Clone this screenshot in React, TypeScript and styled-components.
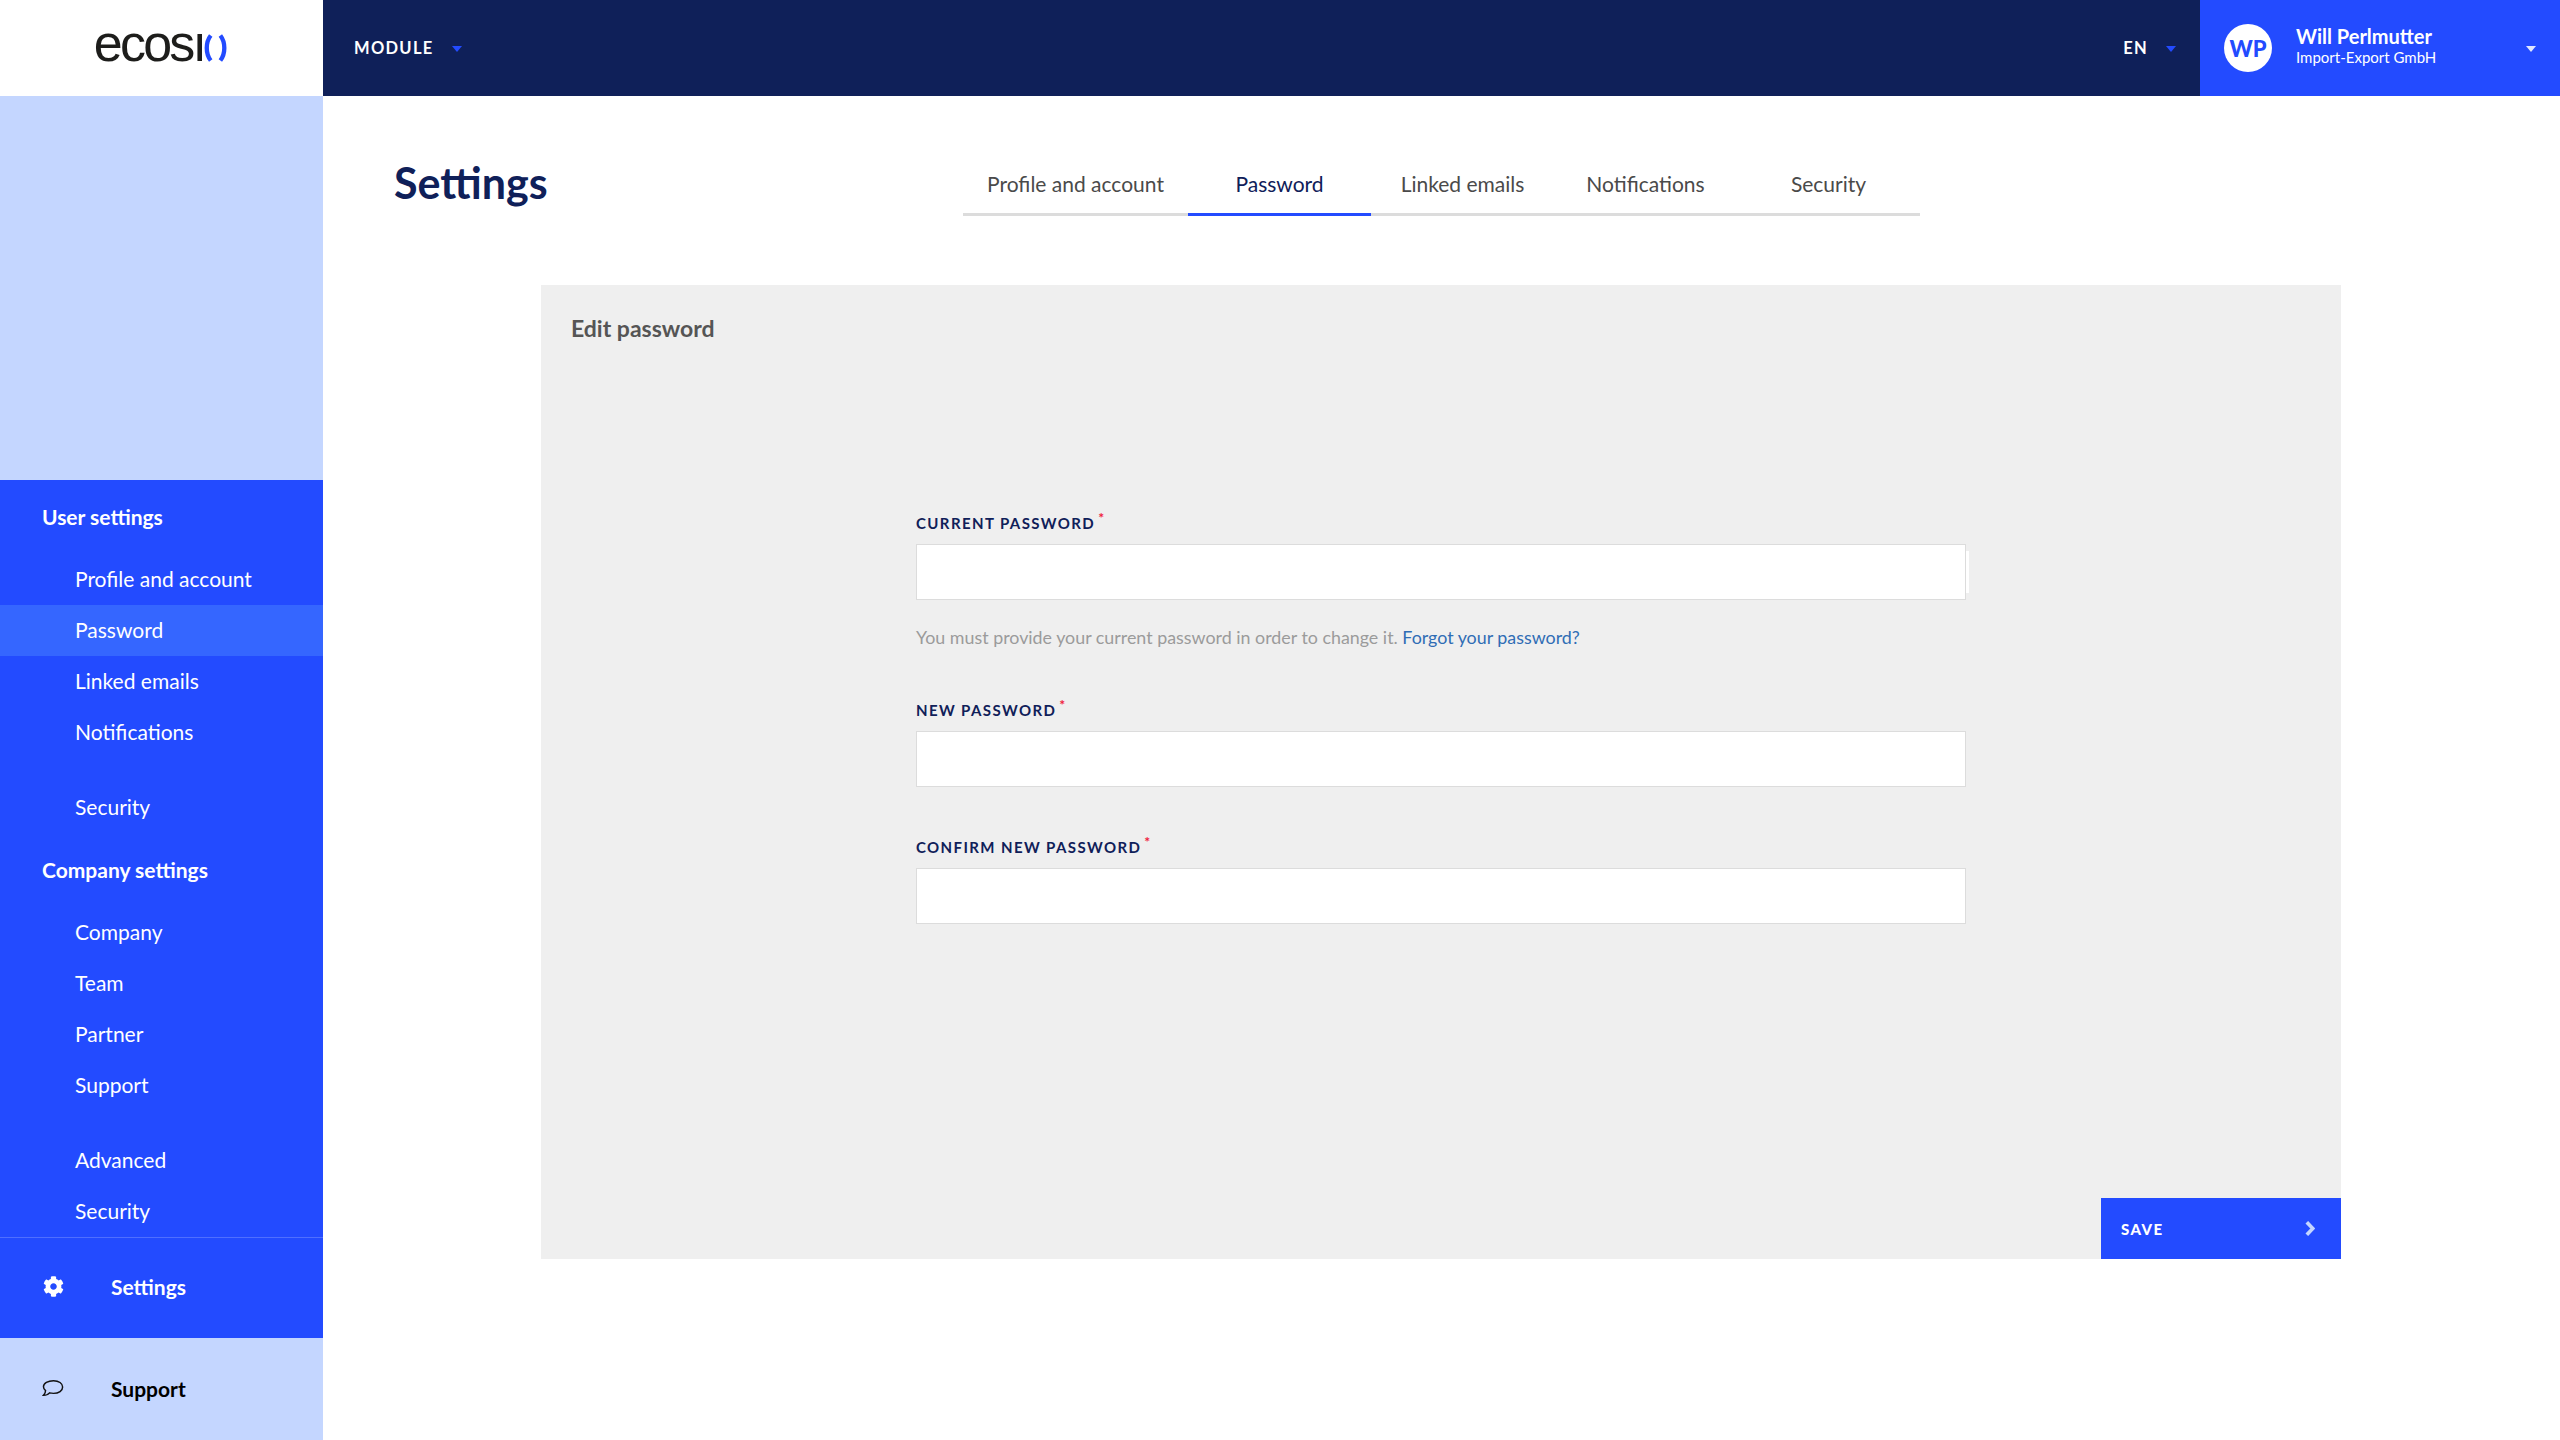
import React, { FC } from "react";
import styled, { createGlobalStyle } from "styled-components";
import { FaCog } from "react-icons/fa";

const NAVY = "#0f2059";
const BLUE = "#234bff";
const LIGHT = "#c4d6ff";

const GlobalStyle = createGlobalStyle`
  html, body {
    margin: 0;
    padding: 0;
    background: #fff;
    font-family: Lato, "Open Sans", sans-serif;
  }
  * {
    box-sizing: border-box;
  }
`;

const Page = styled.div`
  display: grid;
  grid-template-columns: 323px 1fr;
  width: 2560px;
  height: 1440px;
  overflow: hidden;
`;

const Sidebar = styled.aside`
  display: flex;
  flex-direction: column;
  height: 1440px;
  background: ${LIGHT};
`;

const LogoBox = styled.div`
  display: flex;
  align-items: center;
  justify-content: center;
  height: 96px;
  background: #fff;
`;

const LogoText = styled.span`
  font-family: "Liberation Sans", sans-serif;
  font-size: 52px;
  line-height: 52px;
  letter-spacing: -2.8px;
  color: #1d1d1b;
  transform: translateY(-5px);
`;

const LogoParens = styled.svg`
  width: 25px;
  height: 28px;
`;

const Spacer = styled.div`
  height: 384px;
`;

const NavPanel = styled.nav`
  display: flex;
  flex-direction: column;
  height: 757px;
  background: ${BLUE};
`;

const NavHeader = styled.div`
  display: flex;
  align-items: center;
  height: 74px;
  padding: 0 0 1px 42px;
  font-size: 21px;
  font-weight: 700;
  color: #fff;
`;

const NavItem = styled.a<{ $active?: boolean; $gap?: boolean }>`
  display: flex;
  align-items: center;
  height: 51px;
  flex-shrink: 0;
  margin-top: ${(p) => (p.$gap ? "24px" : "0")};
  padding: 0 0 3px 75px;
  font-size: 21px;
  color: #fff;
  background: ${(p) => (p.$active ? "#3566ff" : "transparent")};
`;

const FooterRow = styled.div<{ $light?: boolean }>`
  display: flex;
  align-items: center;
  height: ${(p) => (p.$light ? "102px" : "101px")};
  padding: 0 0 ${(p) => (p.$light ? "1px" : "3px")} 42px;
  font-size: 21px;
  font-weight: 700;
  color: ${(p) => (p.$light ? "#000" : "#fff")};
  background: ${(p) => (p.$light ? LIGHT : BLUE)};
  border-top: ${(p) => (p.$light ? "none" : "1px solid rgba(255, 255, 255, 0.2)")};
`;

const FooterIcon = styled.span`
  display: flex;
  align-items: center;
  justify-content: center;
  width: 22px;
  margin-right: 47px;
  font-size: 21px;
`;

const Content = styled.div`
  display: flex;
  flex-direction: column;
  min-width: 0;
`;

const TopBar = styled.header`
  display: flex;
  align-items: center;
  height: 96px;
  padding-left: 31px;
  background: ${NAVY};
`;

const TopMenu = styled.div`
  display: flex;
  align-items: center;
  padding-bottom: 1px;
  font-size: 16.5px;
  font-weight: 700;
  letter-spacing: 1.3px;
  color: #fff;
`;

const Caret = styled.span<{ $color?: string; $gap: number }>`
  width: 0;
  height: 0;
  margin-left: ${(p) => p.$gap}px;
  margin-top: 2px;
  border-left: 5.5px solid transparent;
  border-right: 5.5px solid transparent;
  border-top: 6px solid ${(p) => p.$color ?? BLUE};
`;

const TopRight = styled.div`
  display: flex;
  align-items: center;
  height: 100%;
  margin-left: auto;
`;

const LangMenu = styled(TopMenu)`
  margin-right: 24px;
`;

const UserBox = styled.div`
  display: flex;
  align-items: center;
  width: 360px;
  height: 100%;
  padding: 0 24px;
  background: ${BLUE};
  color: #fff;
`;

const Avatar = styled.div`
  display: flex;
  align-items: center;
  justify-content: center;
  width: 48px;
  height: 48px;
  border-radius: 50%;
  background: #fff;
  color: ${BLUE};
  font-size: 22px;
  font-weight: 900;
`;

const UserText = styled.div`
  display: flex;
  flex-direction: column;
  margin: 0 auto 7px 24px;
`;

const UserName = styled.div`
  font-size: 20px;
  line-height: 24px;
  font-weight: 700;
`;

const UserCompany = styled.div`
  font-size: 15px;
  line-height: 18px;
`;

const Main = styled.main`
  display: flex;
  flex-direction: column;
  flex: 1;
  padding-top: 58px;
`;

const HeadRow = styled.div`
  display: flex;
  align-items: flex-end;
  height: 62px;
  padding-left: 71px;
`;

const Title = styled.h1`
  width: 569px;
  margin: 0 0 5px;
  font-size: 43px;
  line-height: 56px;
  font-weight: 700;
  color: ${NAVY};
`;

const Tabs = styled.div`
  display: flex;
  width: 957px;
  border-bottom: 3px solid #dcdcdc;
`;

const Tab = styled.a<{ $active?: boolean; $wide?: boolean }>`
  display: flex;
  align-items: center;
  justify-content: center;
  width: ${(p) => (p.$wide ? "225px" : "183px")};
  height: 62px;
  margin-bottom: -3px;
  font-size: 21px;
  color: ${(p) => (p.$active ? NAVY : "#4a4a4a")};
  border-bottom: 3px solid ${(p) => (p.$active ? BLUE : "transparent")};
`;

const Card = styled.section`
  display: flex;
  flex-direction: column;
  width: 1800px;
  height: 974px;
  margin: 69px 0 0 218px;
  background: #efefef;
`;

const CardTitle = styled.h2`
  margin: 28px 0 0 30px;
  font-size: 23px;
  line-height: 30px;
  font-weight: 700;
  color: #555;
`;

const Form = styled.form`
  display: flex;
  flex-direction: column;
  width: 1050px;
  margin: 170px 0 0 375px;
`;

const Field = styled.div<{ $gap?: number }>`
  margin-top: ${(p) => p.$gap ?? 0}px;
`;

const Label = styled.label`
  display: block;
  height: 31px;
  font-size: 15px;
  line-height: 20px;
  font-weight: 700;
  letter-spacing: 1.4px;
  color: ${NAVY};
`;

const Required = styled.sup`
  margin-left: 3px;
  font-size: 14px;
  line-height: 0;
  color: #f0203c;
`;

const InputWrap = styled.div`
  position: relative;
`;

const Input = styled.input`
  display: block;
  width: 100%;
  height: 56px;
  border: 1.5px solid #dcdcdc;
  background: #fff;
  outline: none;
`;

const InputBump = styled.span`
  position: absolute;
  top: 7px;
  right: -3px;
  width: 3px;
  height: 42px;
  background: #fff;
`;

const Hint = styled.p`
  margin: 25px 0 0;
  font-size: 17.85px;
  line-height: 24px;
  color: #9b9b9b;
`;

const HintLink = styled.a`
  color: #2f6db5;
`;

const SaveButton = styled.button`
  display: flex;
  align-items: center;
  justify-content: space-between;
  align-self: flex-end;
  width: 240px;
  height: 61px;
  margin-top: auto;
  padding: 0 26px 0 20px;
  border: none;
  background: ${BLUE};
  color: #fff;
  font-family: inherit;
  font-size: 15px;
  font-weight: 900;
  letter-spacing: 1.4px;
`;

const ChatIcon: FC = () => (
  <svg width="24" height="19" viewBox="0 0 24 19" fill="none" stroke="#111" strokeWidth="1.6">
    <path d="M12.5 1C6.5 1 1.6 3.6 1.6 7.6c0 1.8 1 3.2 2.3 4.2 0 1.8-.9 3.7-2.3 5.2 2.9 0 5.2-1 6.6-2.7 1.3.3 2.8.5 4.3.5 5.9 0 10-2.9 10-6.9S18.4 1 12.5 1z" />
  </svg>
);

const SaveChevron: FC = () => (
  <svg width="10" height="15" viewBox="0 0 10 15" fill="none" stroke="#c4d6ff" strokeWidth="3.6">
    <path d="M1.8 1.2l6 6.3-6 6.3" />
  </svg>
);

const userNav = ["Profile and account", "Password", "Linked emails", "Notifications"];
const companyNav = ["Company", "Team", "Partner", "Support"];
const tabs = ["Profile and account", "Password", "Linked emails", "Notifications", "Security"];

const App: FC = () => {
  return (
    <Page>
      <GlobalStyle />
      <Sidebar>
        <LogoBox>
          <LogoText>ecosı</LogoText>
          <LogoParens viewBox="0 0 26 28">
            <path d="M7 1C1.5 8 1.5 20 7 27" stroke={BLUE} strokeWidth="4.5" fill="none" />
            <path d="M17 1c5.5 7 5.5 19 0 26" stroke={BLUE} strokeWidth="4.5" fill="none" />
          </LogoParens>
        </LogoBox>
        <Spacer />
        <NavPanel>
          <NavHeader>User settings</NavHeader>
          {userNav.map((item) => (
            <NavItem key={item} $active={item === "Password"}>
              {item}
            </NavItem>
          ))}
          <NavItem $gap>Security</NavItem>
          <NavHeader>Company settings</NavHeader>
          {companyNav.map((item) => (
            <NavItem key={item}>{item}</NavItem>
          ))}
          <NavItem $gap>Advanced</NavItem>
          <NavItem>Security</NavItem>
        </NavPanel>
        <FooterRow>
          <FooterIcon>
            <FaCog />
          </FooterIcon>
          Settings
        </FooterRow>
        <FooterRow $light>
          <FooterIcon>
            <ChatIcon />
          </FooterIcon>
          Support
        </FooterRow>
      </Sidebar>
      <Content>
        <TopBar>
          <TopMenu>
            MODULE
            <Caret $gap={18} />
          </TopMenu>
          <TopRight>
            <LangMenu>
              EN
              <Caret $gap={18} />
            </LangMenu>
            <UserBox>
              <Avatar>WP</Avatar>
              <UserText>
                <UserName>Will Perlmutter</UserName>
                <UserCompany>Import-Export GmbH</UserCompany>
              </UserText>
              <Caret $gap={0} $color="#dfe7ff" />
            </UserBox>
          </TopRight>
        </TopBar>
        <Main>
          <HeadRow>
            <Title>Settings</Title>
            <Tabs>
              {tabs.map((tab, i) => (
                <Tab key={tab} $active={tab === "Password"} $wide={i === 0}>
                  {tab}
                </Tab>
              ))}
            </Tabs>
          </HeadRow>
          <Card>
            <CardTitle>Edit password</CardTitle>
            <Form>
              <Field>
                <Label>
                  CURRENT PASSWORD<Required>*</Required>
                </Label>
                <InputWrap>
                  <Input type="password" />
                  <InputBump />
                </InputWrap>
                <Hint>
                  You must provide your current password in order to change it.{" "}
                  <HintLink>Forgot your password?</HintLink>
                </Hint>
              </Field>
              <Field $gap={51}>
                <Label>
                  NEW PASSWORD<Required>*</Required>
                </Label>
                <Input type="password" />
              </Field>
              <Field $gap={50}>
                <Label>
                  CONFIRM NEW PASSWORD<Required>*</Required>
                </Label>
                <Input type="password" />
              </Field>
            </Form>
            <SaveButton>
              SAVE
              <SaveChevron />
            </SaveButton>
          </Card>
        </Main>
      </Content>
    </Page>
  );
};

export default App;
